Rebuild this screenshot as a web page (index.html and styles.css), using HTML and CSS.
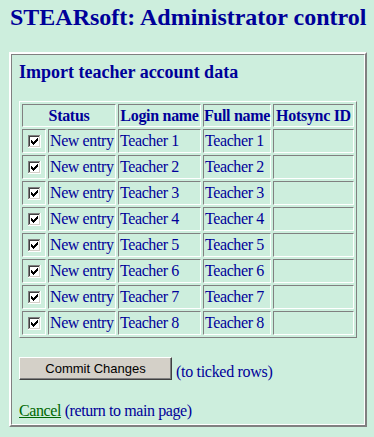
FILE: index.html
```html
<!DOCTYPE html>
<html>
<head>
<meta charset="utf-8">
<title>STEARsoft: Administrator control</title>
<link rel="stylesheet" href="styles.css">
</head>
<body>
<h1 class="title">STEARsoft: Administrator control</h1>
<div class="frame">
  <div class="frame-inner">
    <h3 class="subtitle">Import teacher account data</h3>
    <div class="grid">
      <div class="th span2">Status</div>
      <div class="th">Login name</div>
      <div class="th">Full name</div>
      <div class="th">Hotsync ID</div>

      <div class="td cbcell"><span class="cb"><svg width="13" height="13" viewBox="0 0 13 13" shape-rendering="crispEdges"><rect x="0" y="0" width="13" height="13" fill="#ffffff"/><rect x="0" y="0" width="12" height="1" fill="#808080"/><rect x="0" y="0" width="1" height="12" fill="#808080"/><rect x="1" y="1" width="10" height="1" fill="#404040"/><rect x="1" y="1" width="1" height="10" fill="#404040"/><rect x="1" y="11" width="11" height="1" fill="#d4d0c8"/><rect x="11" y="1" width="1" height="11" fill="#d4d0c8"/><g fill="#000"><rect x="9" y="3" width="1" height="1"/><rect x="8" y="4" width="2" height="1"/><rect x="3" y="5" width="1" height="1"/><rect x="7" y="5" width="3" height="1"/><rect x="3" y="6" width="2" height="1"/><rect x="6" y="6" width="3" height="1"/><rect x="3" y="7" width="5" height="1"/><rect x="4" y="8" width="3" height="1"/><rect x="5" y="9" width="1" height="1"/></g></svg></span></div>
      <div class="td">New entry</div><div class="td">Teacher 1</div><div class="td">Teacher 1</div><div class="td"></div>

      <div class="td cbcell"><span class="cb"><svg width="13" height="13" viewBox="0 0 13 13" shape-rendering="crispEdges"><rect x="0" y="0" width="13" height="13" fill="#ffffff"/><rect x="0" y="0" width="12" height="1" fill="#808080"/><rect x="0" y="0" width="1" height="12" fill="#808080"/><rect x="1" y="1" width="10" height="1" fill="#404040"/><rect x="1" y="1" width="1" height="10" fill="#404040"/><rect x="1" y="11" width="11" height="1" fill="#d4d0c8"/><rect x="11" y="1" width="1" height="11" fill="#d4d0c8"/><g fill="#000"><rect x="9" y="3" width="1" height="1"/><rect x="8" y="4" width="2" height="1"/><rect x="3" y="5" width="1" height="1"/><rect x="7" y="5" width="3" height="1"/><rect x="3" y="6" width="2" height="1"/><rect x="6" y="6" width="3" height="1"/><rect x="3" y="7" width="5" height="1"/><rect x="4" y="8" width="3" height="1"/><rect x="5" y="9" width="1" height="1"/></g></svg></span></div>
      <div class="td">New entry</div><div class="td">Teacher 2</div><div class="td">Teacher 2</div><div class="td"></div>

      <div class="td cbcell"><span class="cb"><svg width="13" height="13" viewBox="0 0 13 13" shape-rendering="crispEdges"><rect x="0" y="0" width="13" height="13" fill="#ffffff"/><rect x="0" y="0" width="12" height="1" fill="#808080"/><rect x="0" y="0" width="1" height="12" fill="#808080"/><rect x="1" y="1" width="10" height="1" fill="#404040"/><rect x="1" y="1" width="1" height="10" fill="#404040"/><rect x="1" y="11" width="11" height="1" fill="#d4d0c8"/><rect x="11" y="1" width="1" height="11" fill="#d4d0c8"/><g fill="#000"><rect x="9" y="3" width="1" height="1"/><rect x="8" y="4" width="2" height="1"/><rect x="3" y="5" width="1" height="1"/><rect x="7" y="5" width="3" height="1"/><rect x="3" y="6" width="2" height="1"/><rect x="6" y="6" width="3" height="1"/><rect x="3" y="7" width="5" height="1"/><rect x="4" y="8" width="3" height="1"/><rect x="5" y="9" width="1" height="1"/></g></svg></span></div>
      <div class="td">New entry</div><div class="td">Teacher 3</div><div class="td">Teacher 3</div><div class="td"></div>

      <div class="td cbcell"><span class="cb"><svg width="13" height="13" viewBox="0 0 13 13" shape-rendering="crispEdges"><rect x="0" y="0" width="13" height="13" fill="#ffffff"/><rect x="0" y="0" width="12" height="1" fill="#808080"/><rect x="0" y="0" width="1" height="12" fill="#808080"/><rect x="1" y="1" width="10" height="1" fill="#404040"/><rect x="1" y="1" width="1" height="10" fill="#404040"/><rect x="1" y="11" width="11" height="1" fill="#d4d0c8"/><rect x="11" y="1" width="1" height="11" fill="#d4d0c8"/><g fill="#000"><rect x="9" y="3" width="1" height="1"/><rect x="8" y="4" width="2" height="1"/><rect x="3" y="5" width="1" height="1"/><rect x="7" y="5" width="3" height="1"/><rect x="3" y="6" width="2" height="1"/><rect x="6" y="6" width="3" height="1"/><rect x="3" y="7" width="5" height="1"/><rect x="4" y="8" width="3" height="1"/><rect x="5" y="9" width="1" height="1"/></g></svg></span></div>
      <div class="td">New entry</div><div class="td">Teacher 4</div><div class="td">Teacher 4</div><div class="td"></div>

      <div class="td cbcell"><span class="cb"><svg width="13" height="13" viewBox="0 0 13 13" shape-rendering="crispEdges"><rect x="0" y="0" width="13" height="13" fill="#ffffff"/><rect x="0" y="0" width="12" height="1" fill="#808080"/><rect x="0" y="0" width="1" height="12" fill="#808080"/><rect x="1" y="1" width="10" height="1" fill="#404040"/><rect x="1" y="1" width="1" height="10" fill="#404040"/><rect x="1" y="11" width="11" height="1" fill="#d4d0c8"/><rect x="11" y="1" width="1" height="11" fill="#d4d0c8"/><g fill="#000"><rect x="9" y="3" width="1" height="1"/><rect x="8" y="4" width="2" height="1"/><rect x="3" y="5" width="1" height="1"/><rect x="7" y="5" width="3" height="1"/><rect x="3" y="6" width="2" height="1"/><rect x="6" y="6" width="3" height="1"/><rect x="3" y="7" width="5" height="1"/><rect x="4" y="8" width="3" height="1"/><rect x="5" y="9" width="1" height="1"/></g></svg></span></div>
      <div class="td">New entry</div><div class="td">Teacher 5</div><div class="td">Teacher 5</div><div class="td"></div>

      <div class="td cbcell"><span class="cb"><svg width="13" height="13" viewBox="0 0 13 13" shape-rendering="crispEdges"><rect x="0" y="0" width="13" height="13" fill="#ffffff"/><rect x="0" y="0" width="12" height="1" fill="#808080"/><rect x="0" y="0" width="1" height="12" fill="#808080"/><rect x="1" y="1" width="10" height="1" fill="#404040"/><rect x="1" y="1" width="1" height="10" fill="#404040"/><rect x="1" y="11" width="11" height="1" fill="#d4d0c8"/><rect x="11" y="1" width="1" height="11" fill="#d4d0c8"/><g fill="#000"><rect x="9" y="3" width="1" height="1"/><rect x="8" y="4" width="2" height="1"/><rect x="3" y="5" width="1" height="1"/><rect x="7" y="5" width="3" height="1"/><rect x="3" y="6" width="2" height="1"/><rect x="6" y="6" width="3" height="1"/><rect x="3" y="7" width="5" height="1"/><rect x="4" y="8" width="3" height="1"/><rect x="5" y="9" width="1" height="1"/></g></svg></span></div>
      <div class="td">New entry</div><div class="td">Teacher 6</div><div class="td">Teacher 6</div><div class="td"></div>

      <div class="td cbcell"><span class="cb"><svg width="13" height="13" viewBox="0 0 13 13" shape-rendering="crispEdges"><rect x="0" y="0" width="13" height="13" fill="#ffffff"/><rect x="0" y="0" width="12" height="1" fill="#808080"/><rect x="0" y="0" width="1" height="12" fill="#808080"/><rect x="1" y="1" width="10" height="1" fill="#404040"/><rect x="1" y="1" width="1" height="10" fill="#404040"/><rect x="1" y="11" width="11" height="1" fill="#d4d0c8"/><rect x="11" y="1" width="1" height="11" fill="#d4d0c8"/><g fill="#000"><rect x="9" y="3" width="1" height="1"/><rect x="8" y="4" width="2" height="1"/><rect x="3" y="5" width="1" height="1"/><rect x="7" y="5" width="3" height="1"/><rect x="3" y="6" width="2" height="1"/><rect x="6" y="6" width="3" height="1"/><rect x="3" y="7" width="5" height="1"/><rect x="4" y="8" width="3" height="1"/><rect x="5" y="9" width="1" height="1"/></g></svg></span></div>
      <div class="td">New entry</div><div class="td">Teacher 7</div><div class="td">Teacher 7</div><div class="td"></div>

      <div class="td cbcell"><span class="cb"><svg width="13" height="13" viewBox="0 0 13 13" shape-rendering="crispEdges"><rect x="0" y="0" width="13" height="13" fill="#ffffff"/><rect x="0" y="0" width="12" height="1" fill="#808080"/><rect x="0" y="0" width="1" height="12" fill="#808080"/><rect x="1" y="1" width="10" height="1" fill="#404040"/><rect x="1" y="1" width="1" height="10" fill="#404040"/><rect x="1" y="11" width="11" height="1" fill="#d4d0c8"/><rect x="11" y="1" width="1" height="11" fill="#d4d0c8"/><g fill="#000"><rect x="9" y="3" width="1" height="1"/><rect x="8" y="4" width="2" height="1"/><rect x="3" y="5" width="1" height="1"/><rect x="7" y="5" width="3" height="1"/><rect x="3" y="6" width="2" height="1"/><rect x="6" y="6" width="3" height="1"/><rect x="3" y="7" width="5" height="1"/><rect x="4" y="8" width="3" height="1"/><rect x="5" y="9" width="1" height="1"/></g></svg></span></div>
      <div class="td">New entry</div><div class="td">Teacher 8</div><div class="td">Teacher 8</div><div class="td"></div>
    </div>

    <div class="actions">
      <button class="btn" type="button">Commit Changes</button>
      <span class="note">(to ticked rows)</span>
    </div>

    <p class="cancel"><a class="link" href="#">Cancel</a> (return to main page)</p>
  </div>
</div>
</body>
</html>
```

FILE: styles.css
```css
html, body {
  margin: 0;
  padding: 0;
}

body {
  background: #cdeedd;
  color: #000099;
  font-family: "Liberation Serif", "Times New Roman", serif;
  font-size: 16px;
  padding-top: 3px;
}

.title {
  margin: 0 0 21px 10px;
  font-size: 24px;
  line-height: 28px;
  font-weight: bold;
  white-space: nowrap;
}

.frame {
  margin-left: 9px;
  width: 358px;
  box-sizing: border-box;
  border-style: solid;
  border-width: 2px;
  border-color: #ffffff #808080 #808080 #ffffff;
}

.frame-inner {
  border-style: solid;
  border-width: 1px;
  border-color: #808080 #ffffff #ffffff #808080;
  padding: 6px 7px 4px 7px;
}

.subtitle {
  margin: 0 0 18px 0;
  font-size: 18px;
  line-height: 22px;
  font-weight: bold;
}

.grid {
  display: grid;
  grid-template-columns: 24px 68px 83px 68px 81px;
  grid-template-rows: 23px repeat(8, 24px);
  gap: 2px;
  padding: 2px;
  width: 338px;
  box-sizing: border-box;
  border-style: solid;
  border-width: 1px;
  border-color: #ffffff #808080 #808080 #ffffff;
}

.th, .td {
  box-sizing: border-box;
  border-style: solid;
  border-width: 1px;
  border-color: #808080 #ffffff #ffffff #808080;
  padding: 0 1px;
  display: flex;
  align-items: center;
  white-space: nowrap;
  overflow: visible;
  letter-spacing: -0.4px;
}

.th {
  font-weight: bold;
  justify-content: center;
  letter-spacing: -0.3px;
}

.span2 {
  grid-column: span 2;
}

.cbcell {
  justify-content: center;
  padding: 0;
}

.cb {
  display: block;
  width: 13px;
  height: 13px;
  margin-left: 1px;
}

.cb svg {
  display: block;
}

.actions {
  display: flex;
  align-items: flex-start;
  gap: 4px;
  margin-top: 19px;
}

.btn {
  width: 153px;
  height: 23px;
  box-sizing: border-box;
  margin: 0;
  padding: 0;
  background: #d4d0c8;
  border-style: solid;
  border-width: 1px;
  border-color: #ffffff #404040 #404040 #ffffff;
  box-shadow: inset -1px -1px 0 #808080;
  font-family: "Liberation Sans", Arial, sans-serif;
  font-size: 13px;
  color: #000000;
  display: flex;
  align-items: center;
  justify-content: center;
}

.note {
  margin-top: 6px;
  font-size: 16px;
  line-height: 18px;
  letter-spacing: -0.3px;
}

.cancel {
  margin: 21px 0 0 0;
  line-height: 18px;
  letter-spacing: -0.4px;
}

.link {
  color: #006600;
  text-decoration: underline;
}
```
